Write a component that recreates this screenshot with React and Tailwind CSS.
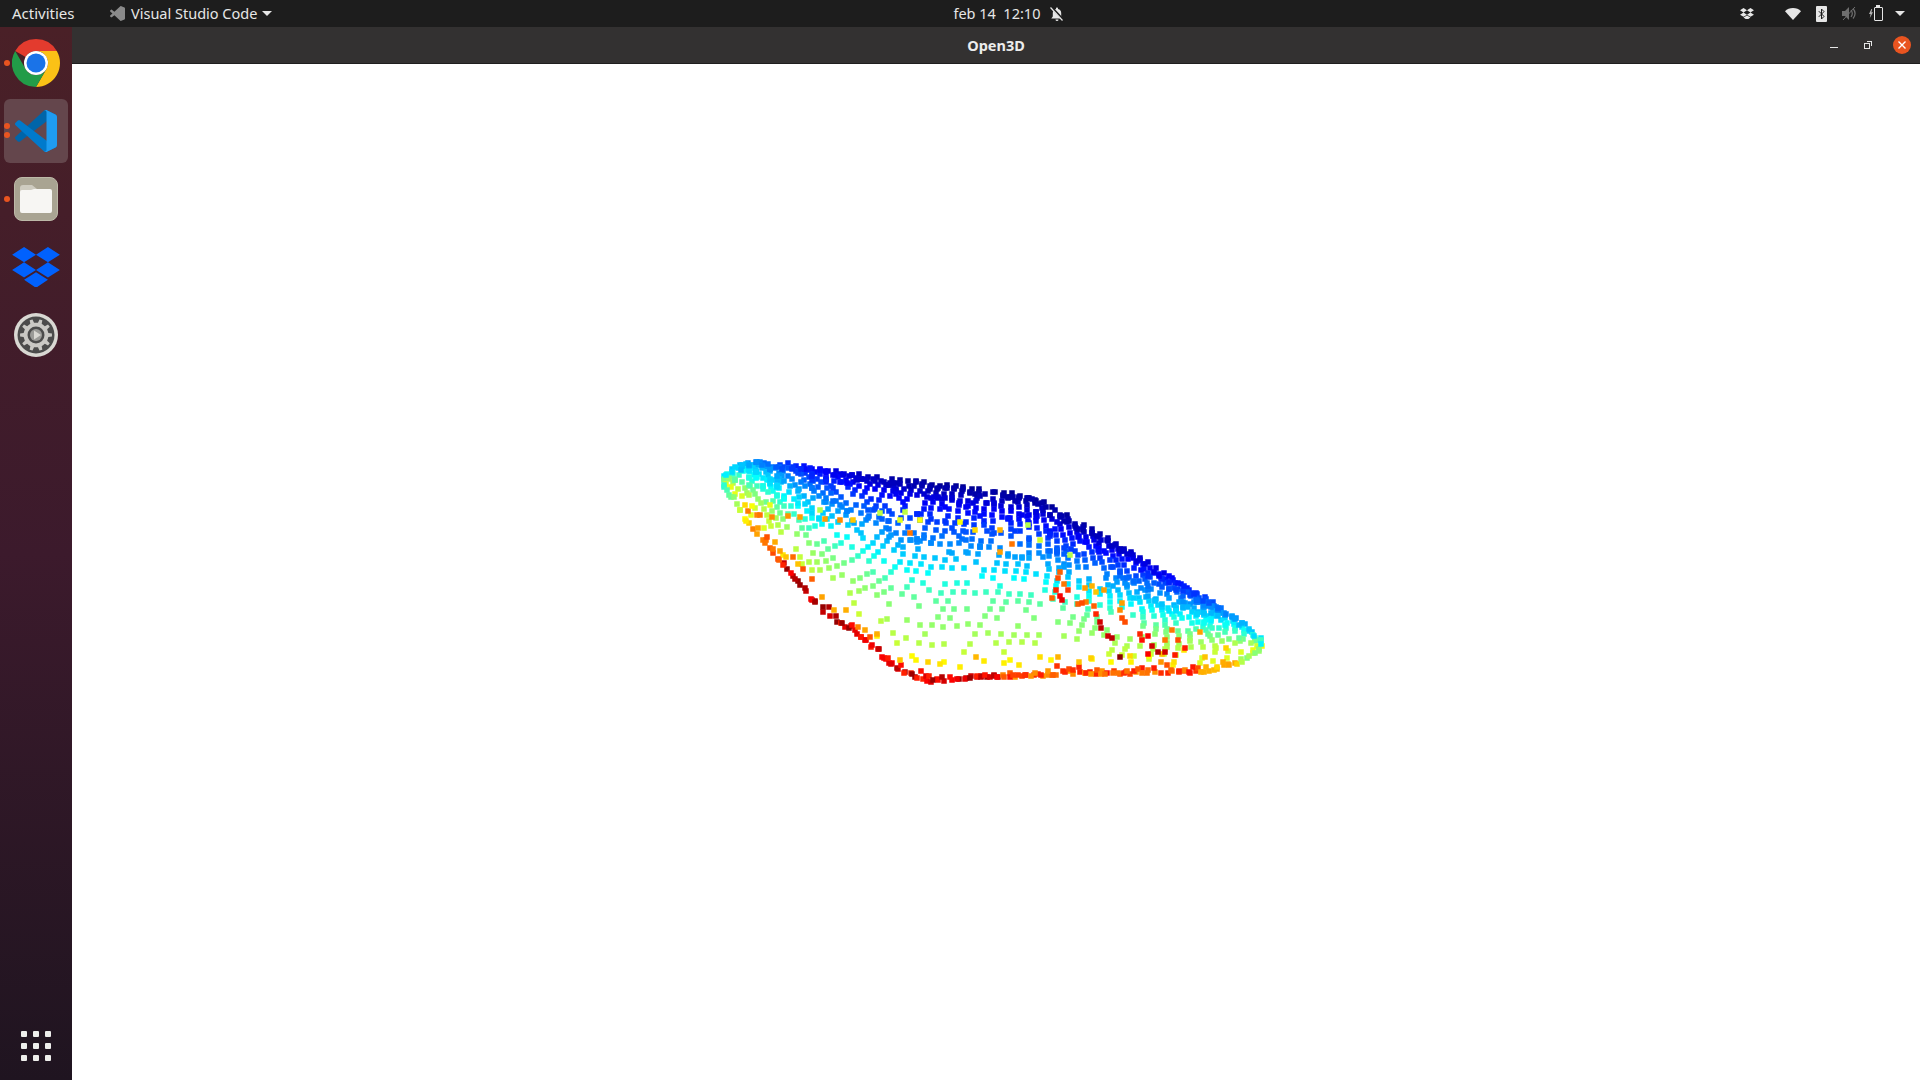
import React from "react";

const TOP = [[720,482],[728,470],[747,462],[760,461],[790,465],[810,468],[860,475],[900,480],[960,487],[1000,492],[1040,500],[1080,523],[1130,552],[1180,583],[1230,613],[1262,640],[1265,648]];
const BOTTOM = [[720,482],[750,527],[790,573],[820,610],[860,637],[900,673],[930,682],[980,678],[1100,674],[1200,673],[1240,665],[1265,648]];

const lerpCurve = (curve, x) => {
    for (let i = 1; i < curve.length; i++) {
        if (x <= curve[i][0]) {
            const [x0, y0] = curve[i - 1];
            const [x1, y1] = curve[i];
            return y0 + ((y1 - y0) * (x - x0)) / (x1 - x0);
        }
    }
    return curve[curve.length - 1][1];
};

const seeded = (seed) => () => {
    seed = (seed + 0x6d2b79f5) | 0;
    let t = Math.imul(seed ^ (seed >>> 15), 1 | seed);
    t = (t + Math.imul(t ^ (t >>> 7), 61 | t)) ^ t;
    return ((t ^ (t >>> 14)) >>> 0) / 4294967296;
};

const jet = (c) => {
    const ch = (o) => Math.round(255 * Math.max(0, Math.min(1, 1.5 - Math.abs(4 * c - o))));
    return `rgb(${ch(3)},${ch(2)},${ch(1)})`;
};

const colorAt = (x, t) => {
    let c;
    if (t < 0.08) c = 0.02 + t;
    else if (t < 0.6) c = 0.1 + (t - 0.08) * 0.72;
    else if (t < 0.88) c = 0.476 + (t - 0.6) * 0.36;
    else c = 0.577 + (t - 0.88) * 2.2;
    // back edge gets lighter toward both corners
    const far = x < 1000 ? (1000 - x) / 280 : (x - 1000) / 265;
    c += (1 - t) * far * far * far * 0.35;
    return Math.min(0.98, c);
};

const rimColor = (x, rand) => {
    if (x < 735) return 0.42 + ((x - 724) / 11) * 0.1;
    if (x < 750) return 0.52 + ((x - 735) / 15) * 0.16;
    if (x < 780) return 0.68 + ((x - 750) / 30) * 0.1 + rand() * 0.06;
    if (x < 1000) return 0.84 + rand() * 0.14;
    if (x < 1200) return 0.72 + rand() * 0.14;
    if (x < 1240) return 0.66 + rand() * 0.06;
    return 0.5 + rand() * 0.1;
};

const buildCloud = () => {
    const rand = seeded(2024);
    const pts = [];
    const rows = 26;
    for (let k = 0; k < rows; k++) {
        const t = Math.pow(k / rows, 1.25);
        if (t > 0.92) break;
        const step = 8 + t * 6;
        for (let j = 0; j < 90; j++) {
            const x = 724 + ((k * 3) % step) + j * step + (rand() - 0.5) * 1.5;
            if (x > 1262) break;
            const drop = t > 0.82 ? 0.68 : 0.14 + t * 0.3;
            if (rand() < drop) continue;
            const yt = lerpCurve(TOP, x);
            const yb = lerpCurve(BOTTOM, x);
            // the tapering left side holds fewer rows
            if (yb - yt < 60 && k % 2 === 1) continue;
            const y = yt + (yb - yt) * t + (rand() - 0.5) * 2.5;
            pts.push([x, y, jet(colorAt(x, t))]);
        }
    }
    // denser blue band at the back
    for (let i = 0; i < 220; i++) {
        const x = 735 + rand() * 510;
        const t = rand() * 0.36;
        const yt = lerpCurve(TOP, x);
        const yb = lerpCurve(BOTTOM, x);
        pts.push([x - (x % 7), yt + (yb - yt) * t, jet(colorAt(x, t))]);
    }
    // thick rim along the front edge, two passes
    for (let pass = 0; pass < 2; pass++) {
        for (let x = 724; x < 1262; x += 3 + rand() * 5) {
            const yb = lerpCurve(BOTTOM, x);
            const off = rand() * rand() * (pass ? 12 : 6);
            pts.push([x, yb - off, jet(rimColor(x, rand))]);
        }
    }
    // yellow and orange band just inside the left rim
    for (let x = 745; x < 880; x += 5 + rand() * 8) {
        const yb = lerpCurve(BOTTOM, x);
        pts.push([x + 3, yb - 6 - rand() * 12, jet(0.68 + rand() * 0.12)]);
    }
    // yellow dashes just above the front rim
    for (let x = 900; x < 1240; x += 8 + rand() * 14) {
        const yb = lerpCurve(BOTTOM, x);
        pts.push([x, yb - 10 - rand() * 14, jet(0.62 + rand() * 0.08)]);
    }
    // back edge
    for (let x = 726; x < 1262; x += 5 + rand() * 5) {
        const yt = lerpCurve(TOP, x);
        pts.push([x, yt + rand() * 6, jet(colorAt(x, 0.02))]);
    }
    // bright specks inside the cloud: the folded patch on the right and the streak at the back
    const specks = [
        [1058,578,0.8],[1060,572,0.78],[1064,584,0.76],[1056,590,0.84],[1060,596,0.88],[1062,600,0.9],[1068,590,0.82],[1052,598,0.78],
        [1085,588,0.72],[1092,586,0.7],[1096,592,0.68],[1104,590,0.72],[1078,604,0.78],[1086,602,0.75],
        [1082,603,0.8],[1094,606,0.78],[1096,614,0.84],[1100,622,0.92],[1101,628,0.94],[1108,636,0.92],[1112,638,0.94],
        [1122,603,0.72],[1120,610,0.74],[1122,618,0.8],[1125,622,0.8],[1140,634,0.84],[1142,640,0.86],[1148,636,0.88],
        [1152,646,0.92],[1158,652,0.95],[1165,652,0.92],[1148,654,0.88],[1175,655,0.85],[1185,648,0.85],[1178,640,0.8],
        [1120,657,0.99],[1165,640,0.76],[1172,630,0.76],[1200,632,0.72],
        [760,515,0.76],[772,517,0.74],[788,516,0.73],[800,517,0.72],[825,519,0.72],[840,520,0.74],[853,520,0.68],
        [745,505,0.66],[752,506,0.62],[770,505,0.6],[820,510,0.55],[880,513,0.56],[900,520,0.6],[905,512,0.56],[920,520,0.62],[960,522,0.62],[1000,530,0.7],[910,533,0.76],[975,530,0.66],
        [1000,552,0.72],[1012,544,0.76],[1028,525,0.55],[1040,540,0.58],[1070,555,0.55],
    ];
    specks.forEach(([x, y, c]) => pts.push([x, y, jet(c)]));
    return pts;
};

const cloud = buildCloud();

const Chrome = () => (
    <svg width="48" height="48" viewBox="0 0 48 48">
        <path fill="#e33b2e" d="M24 0A24 24 0 0 1 44.78 12H24A12 12 0 0 0 13.6 18L3.2 12A24 24 0 0 1 24 0Z" />
        <path fill="#fbc116" d="M24 12H44.78A24 24 0 0 1 24 48L34.4 30A12 12 0 0 0 24 12Z" />
        <path fill="#229c48" d="M3.2 12L13.6 30A12 12 0 0 0 34.4 30L24 48A24 24 0 0 1 3.2 12Z" />
        <circle cx="24" cy="24" r="12" fill="#fff" />
        <circle cx="24" cy="24" r="9.5" fill="#1a73e8" />
    </svg>
);

const VSCODE_SHAPE = "M70.91 99.32C72.49 99.93 74.28 99.89 75.87 99.13L96.46 89.22C98.62 88.18 100 85.99 100 83.59V16.41C100 14.01 98.62 11.82 96.46 10.78L75.87 0.87C73.79 -0.13 71.34 0.12 69.51 1.45C69.25 1.64 69 1.85 68.77 2.08L29.36 38.04L12.19 25.01C10.59 23.8 8.35 23.9 6.87 25.25L1.36 30.25C-0.45 31.91 -0.45 34.76 1.36 36.42L16.25 50L1.36 63.58C-0.45 65.24 -0.45 68.09 1.36 69.75L6.87 74.75C8.35 76.1 10.59 76.2 12.19 74.99L29.36 61.96L68.77 97.92C69.39 98.54 70.12 99.01 70.91 99.32ZM75.02 27.3L45.11 50L75.02 72.7V27.3Z";

const VSCode = () => (
    <svg width="42" height="42" viewBox="0 0 100 100">
        <path fill="#0065a9" d="M96.46 10.8L75.86 0.88C73.47 -0.27 70.62 0.21 68.75 2.08L1.3 63.58C-0.52 65.24 -0.51 68.09 1.3 69.75L6.81 74.75C8.3 76.1 10.53 76.2 12.13 74.99L93.36 13.37C96.09 11.3 100 13.25 100 16.67V16.43C100 14.03 98.62 11.84 96.46 10.8Z" />
        <path fill="#007acc" d="M96.46 89.2L75.86 99.12C73.47 100.27 70.62 99.79 68.75 97.92L1.3 36.42C-0.52 34.76 -0.51 31.91 1.3 30.25L6.81 25.25C8.3 23.9 10.53 23.8 12.13 25.01L93.36 86.63C96.09 88.7 100 86.75 100 83.33V83.57C100 85.97 98.62 88.16 96.46 89.2Z" />
        <path fill="#1f9cf0" d="M75.86 99.13C73.47 100.27 70.62 99.79 68.75 97.92C71.06 100.22 75 98.59 75 95.33V4.67C75 1.41 71.06 -0.22 68.75 2.08C70.62 0.21 73.47 -0.27 75.86 0.87L96.46 10.78C98.62 11.82 100 14.01 100 16.41V83.59C100 85.99 98.62 88.18 96.46 89.22L75.86 99.13Z" />
    </svg>
);

const Files = () => (
    <div className="w-11 h-11 rounded-lg bg-[#a9a492] border border-[#bdb9a8] flex items-center justify-center">
        <svg width="32" height="28" viewBox="0 0 32 28">
            <path fill="#cfccc0" d="M0 3a3 3 0 0 1 3-3h9l5 4v6H0Z" />
            <path fill="#f7f6f3" d="M0 7a2 2 0 0 1 2-2h9l3-1h16a2 2 0 0 1 2 2v20a2 2 0 0 1-2 2H2a2 2 0 0 1-2-2Z" />
        </svg>
    </div>
);

const Dropbox = ({ size = 48, fill = "#0061fe" }) => (
    <svg width={size} height={size * 0.85} viewBox="0 0 48 41">
        <path fill={fill} d="M12 0L24 7.700 12 15.300 0 7.700ZM36 0L48 7.700 36 15.300 24 7.700ZM0 23L12 15.300 24 23 12 30.600ZM36 15.300L48 23 36 30.600 24 23ZM12 33L24 25.500 36 33 24 41Z" />
    </svg>
);

const gearPath = () => {
    let d = "";
    const teeth = 10;
    for (let i = 0; i < teeth; i++) {
        const a = (i / teeth) * Math.PI * 2;
        const w = Math.PI / teeth;
        const p = [
            [a - w * 0.5, 12.5],
            [a - w * 0.3, 16],
            [a + w * 0.3, 16],
            [a + w * 0.5, 12.5],
        ];
        p.forEach(([ang, r], j) => {
            d += `${i === 0 && j === 0 ? "M" : "L"}${(22 + r * Math.cos(ang)).toFixed(2)} ${(22 + r * Math.sin(ang)).toFixed(2)}`;
        });
    }
    return d + "Z";
};

const Settings = () => (
    <svg width="44" height="44" viewBox="0 0 44 44">
        <circle cx="22" cy="22" r="22" fill="#d9d8d3" />
        <circle cx="22" cy="22" r="18.5" fill="#4b4b4b" />
        <path fill="#c9c8c4" d={gearPath()} />
        <circle cx="22" cy="22" r="8.5" fill="#4b4b4b" />
        <circle cx="22" cy="22" r="6" fill="#9b9b98" />
        <path fill="#d9d8d3" d="M20 17.5L27 22l-7 4.500Z" />
    </svg>
);

const Dots = ({ count, top }) => (
    <div className={`absolute left-0 flex flex-col gap-[3px] ${top}`}>
        {Array.from({ length: count }).map((_, i) => (
            <span key={i} className="block w-[6px] h-[6px] rounded-full bg-[#e95420]" />
        ))}
    </div>
);

const DockItem = ({ children, active, dots }) => (
    <div className={`relative w-16 h-16 rounded-md flex items-center justify-center ${active ? "bg-[#64464c]" : ""}`}>
        {children}
        {dots === 1 && <Dots count={1} top="top-[29px]" />}
        {dots === 2 && <Dots count={2} top="top-6" />}
    </div>
);

const Dock = () => (
    <aside className="w-[72px] shrink-0 flex flex-col items-center gap-1 pt-1 bg-gradient-to-b from-[#4a2027] via-[#3c1a2c] to-[#1f1420]">
        <DockItem dots={1}><Chrome /></DockItem>
        <DockItem active dots={2}><VSCode /></DockItem>
        <DockItem dots={1}><Files /></DockItem>
        <DockItem><Dropbox /></DockItem>
        <DockItem><Settings /></DockItem>
        <div className="mt-auto mb-[2px] w-16 h-16 grid grid-cols-[repeat(3,6px)] gap-[6px] place-content-center">
            {Array.from({ length: 9 }).map((_, i) => (
                <span key={i} className="block w-[6px] h-[6px] rounded-[1px] bg-[#eeeeec]" />
            ))}
        </div>
    </aside>
);

const TopBar = () => (
    <header className="h-[27px] shrink-0 bg-[#1d1d1d] text-[#e6e6e6] text-[14.5px] flex items-center font-['Noto_Sans',sans-serif]">
        <span className="ml-3 w-[98px] text-[15px]">Activities</span>
        <svg width="15" height="15" viewBox="0 0 100 100" className="-mt-px">
            <path fill="#8a8a8a" d={VSCODE_SHAPE} />
        </svg>
        <span className="ml-[6px]">Visual Studio Code</span>
        <svg width="10" height="5" viewBox="0 0 10 5" className="ml-[5px]">
            <path fill="#e6e6e6" d="M0 0h10L5 5Z" />
        </svg>
        <span className="ml-[681px]">feb 14&nbsp;&nbsp;12:10</span>
        <svg width="16" height="16" viewBox="0 0 16 16" className="ml-[9px]">
            <path fill="#e6e6e6" d="M8 1.500c-.6 0-1 .4-1 1v.6C4.800 3.600 3.800 5 3.800 7v3.500L2.300 12.500h11.400L12.200 10.500V7c0-2-1-3.400-3.200-3.900v-.6c0-.6-.4-1-1-1ZM6.500 13.500a1.500 1.500 0 0 0 3 0Z" />
            <path stroke="#1d1d1d" strokeWidth="2.500" d="M2.800 1.500l12 13" />
            <path stroke="#e6e6e6" strokeWidth="1.200" d="M1.500 1.500l12 13" />
        </svg>
        <div className="ml-auto flex items-center mr-[15px]">
            <Dropbox size={14} fill="#e6e6e6" />
            <svg width="16" height="12" viewBox="0 0 16 12" className="ml-[31px]">
                <path fill="#e6e6e6" d="M8 12L0 3.200C2 1.200 4.800 0 8 0s6 1.200 8 3.200Z" />
            </svg>
            <div className="ml-[15px] w-[11px] h-4 rounded-[1px] bg-[#e6e6e6] flex items-center justify-center">
                <svg width="7" height="12" viewBox="0 0 7 12" fill="none" stroke="#1d1d1d" strokeWidth="1">
                    <path d="M0.800 3.200L6 8.400 3.500 11V1L6 3.600 0.800 8.800" />
                </svg>
            </div>
            <svg width="15" height="15" viewBox="0 0 15 15" className="ml-[15px]" fill="none">
                <path fill="#6f6f6f" d="M0 5h3l4-4v13l-4-4H0Z" />
                <path stroke="#6f6f6f" strokeWidth="1.2" d="M9 4c1.500 2 1.500 5 0 7M11 2.500c2.500 3 2.500 7 0 10" />
                <path stroke="#6f6f6f" strokeWidth="1" d="M1 14L13 1" />
            </svg>
            <svg width="4" height="11" viewBox="0 0 5 11" className="ml-[12px]">
                <path fill="#b5b5b5" d="M3 0L0 6h2l-1 5 4-7H3l1-4Z" />
            </svg>
            <div className="ml-px w-[9px] h-[14px] border border-[#e6e6e6] rounded-[1px] relative mt-px">
                <span className="absolute -top-[3px] left-[1px] w-1 h-[2px] bg-[#e6e6e6]" />
            </div>
            <svg width="10" height="5" viewBox="0 0 10 5" className="ml-3">
                <path fill="#e6e6e6" d="M0 0h10L5 5Z" />
            </svg>
        </div>
    </header>
);

const TitleBar = () => (
    <div className="h-[37px] shrink-0 bg-[#333131] border-b border-[#1f1e1e] flex items-center relative font-['Noto_Sans',sans-serif]">
        <span className="mx-auto pt-px text-[14.5px] font-bold text-[#ececec]">Open3D</span>
        <div className="absolute right-[9px] top-0 h-full flex items-center">
            <span className="w-2 h-px mt-[5px] bg-[#e6e6e6] mr-[26px]" />
            <div className="relative w-2 h-2 mr-[21px]">
                <span className="absolute left-0 bottom-0 w-[6px] h-[6px] border border-[#e6e6e6]" />
                <span className="absolute right-0 top-0 w-[5px] h-[5px] border-t border-r border-[#e6e6e6]" />
            </div>
            <div className="w-[18px] h-[18px] rounded-full bg-[#e95420] flex items-center justify-center">
                <svg width="8" height="8" viewBox="0 0 8 8" stroke="#fff" strokeWidth="1.4">
                    <path d="M0.500 0.500l7 7M7.500 0.500l-7 7" />
                </svg>
            </div>
        </div>
    </div>
);

const PointCloud = () => (
    <svg width="1848" height="1016" viewBox="72 64 1848 1016" className="block">
        {cloud.map(([x, y, fill], i) => (
            <rect key={i} x={Math.round(x) - 2.75} y={Math.round(y) - 2.75} width="5.5" height="5.5" fill={fill} />
        ))}
    </svg>
);

export default function App() {
    return (
        <div className="w-[1920px] h-[1080px] flex flex-col overflow-hidden bg-white">
            <TopBar />
            <div className="flex-1 flex min-h-0">
                <Dock />
                <main className="flex-1 flex flex-col min-w-0">
                    <TitleBar />
                    <div className="flex-1 bg-white">
                        <PointCloud />
                    </div>
                </main>
            </div>
        </div>
    );
}
